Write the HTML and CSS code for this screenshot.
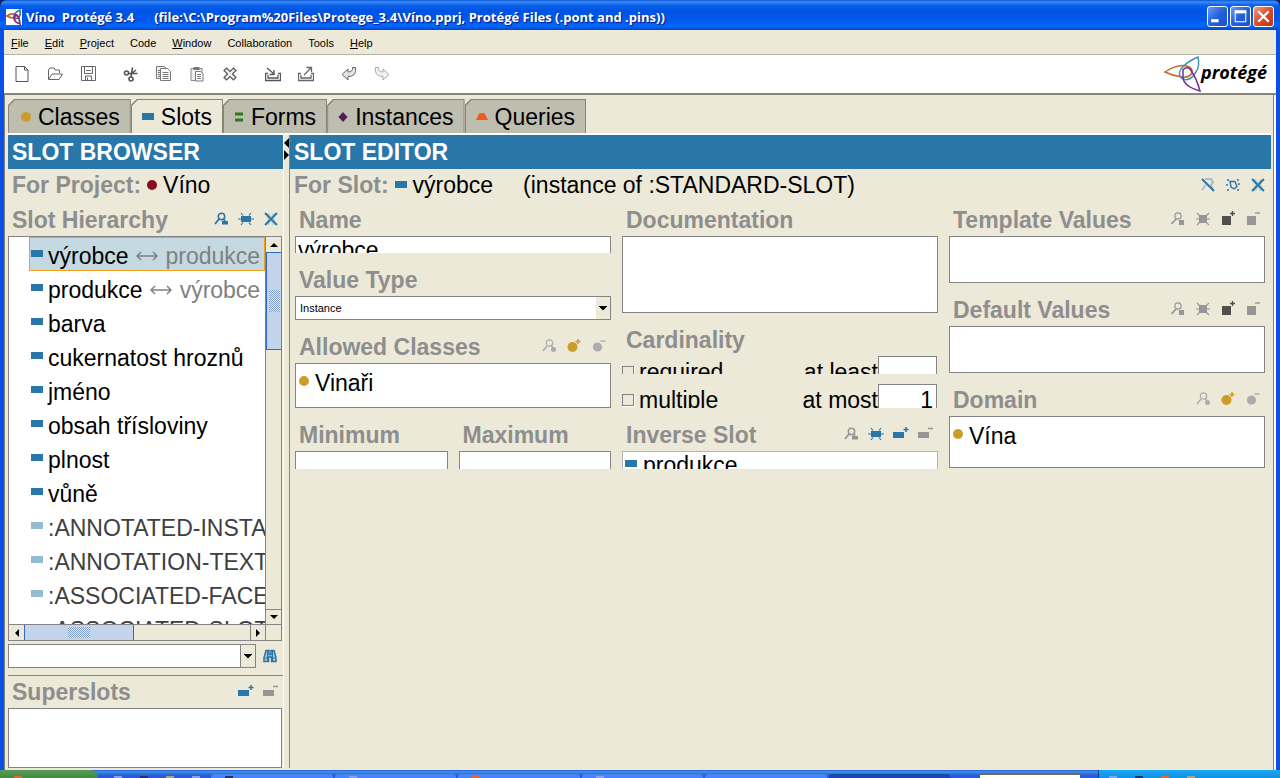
FILE: index.html
```html
<!DOCTYPE html>
<html lang="cs">
<head>
<meta charset="utf-8">
<title>Víno Protégé 3.4</title>
<link rel="stylesheet" href="styles.css">
</head>
<body>
<svg class="sprite" aria-hidden="true">
  <symbol id="view" viewBox="0 0 16 16"><circle cx="8.500" cy="5.500" r="3.200" fill="none" stroke="currentColor" stroke-width="1.500"/><path d="M6 8 2 13M10.500 8l1.500 2" stroke="currentColor" stroke-width="1.800"/><rect x="9" y="10" width="6" height="3.500" fill="currentColor"/></symbol>
  <symbol id="view-dot" viewBox="0 0 16 16"><circle cx="8.500" cy="5" r="3.200" fill="none" stroke="currentColor" stroke-width="1.200"/><path d="M6 8 2 13M10.500 8l1.500 2" stroke="currentColor" stroke-width="1.500"/><circle cx="12.500" cy="11.500" r="2.500" fill="currentColor"/></symbol>
  <symbol id="view-sq" viewBox="0 0 16 16"><circle cx="8" cy="5" r="3.200" fill="none" stroke="currentColor" stroke-width="1.200"/><path d="M6 8 1.500 13" stroke="currentColor" stroke-width="1.800"/><rect x="9" y="9" width="5" height="5" fill="currentColor"/></symbol>
  <symbol id="create" viewBox="0 0 16 16"><rect x="3" y="5" width="10" height="6" fill="currentColor"/><path d="M0 8h3M13 8h3M3 2l2 2.500M13 2l-2 2.500M3 14l2-2.500M13 14l-2-2.500" stroke="currentColor" stroke-width="1.200"/></symbol>
  <symbol id="create-sq" viewBox="0 0 16 16"><rect x="4" y="4" width="8" height="8" fill="currentColor"/><path d="M1 8h3M12 8h3M2 2l3 3M14 2l-3 3M2 14l3-3M14 14l-3-3" stroke="currentColor" stroke-width="1.200"/></symbol>
  <symbol id="cross" viewBox="0 0 16 16"><path d="M2 2h4l2 4 2-4h4l-3 6 3 6h-4l-2-4-2 4H2l3-6z" fill="currentColor" opacity=".25"/><path d="m2 2 12 12M14 2 2 14" stroke="currentColor" stroke-width="1.800"/></symbol>
  <symbol id="add-slot" viewBox="0 0 16 16"><rect x="0" y="6" width="11" height="6" fill="currentColor"/><path d="M13 1v5M10.500 3.500h5" stroke="currentColor" stroke-width="1.500"/></symbol>
  <symbol id="rem-slot" viewBox="0 0 16 16"><rect x="0" y="6" width="11" height="6" fill="currentColor"/><path d="M10 2.500h5" stroke="currentColor" stroke-width="1.500"/></symbol>
  <symbol id="add-dot" viewBox="0 0 16 16"><circle cx="6.500" cy="9" r="5" fill="currentColor"/><path d="M12 1v5M9.500 3.500h5" stroke="currentColor" stroke-width="1.500"/></symbol>
  <symbol id="rem-dot" viewBox="0 0 16 16"><circle cx="6.500" cy="9" r="4.600" fill="currentColor"/><path d="M9.500 3h5" stroke="currentColor" stroke-width="1.400"/></symbol>
  <symbol id="add-sq" viewBox="0 0 16 16"><rect x="2" y="5" width="9" height="9" fill="currentColor"/><path d="M12.500 0v5M10 2.500h5" stroke="currentColor" stroke-width="1.400"/></symbol>
  <symbol id="rem-sq" viewBox="0 0 16 16"><rect x="2" y="5" width="9" height="9" fill="currentColor"/><path d="M10 2h5" stroke="currentColor" stroke-width="1.400"/></symbol>
  <symbol id="slot" viewBox="0 0 12 7"><rect width="12" height="7" fill="currentColor"/></symbol>
  <symbol id="dot" viewBox="0 0 10 10"><circle cx="5" cy="5" r="5" fill="currentColor"/></symbol>
  <symbol id="arrows" viewBox="0 0 22 10"><path d="M1 5h20M5 1 1 5l4 4M17 1l4 4-4 4" fill="none" stroke="currentColor" stroke-width="1.500"/></symbol>
</svg>

<div class="window">
  <header class="titlebar">
    <svg class="app-icon" viewBox="0 0 16 16"><rect width="16" height="16" fill="#fff"/><path d="M1 7Q6 3 11 6.500 7 11 1 7z" fill="none" stroke="#c0622a" stroke-width="1.800"/><path d="M14 1q1 6-2 8-4 2-4-2 1-4 6-6z" fill="none" stroke="#3b6fa0" stroke-width="1.600"/><path d="M9 6q4-1 5 9-6-2-6-6z" fill="none" stroke="#763191" stroke-width="1.800"/></svg>
    <h1 class="title"><span>Víno&nbsp; Protégé 3.4</span><span>(file:\C:\Program%20Files\Protege_3.4\Víno.pprj, Protégé Files (.pont and .pins))</span></h1>
    <div class="win-buttons">
      <button class="win-btn" aria-label="Minimize"><svg viewBox="0 0 18 18"><path d="M3 13h7" stroke="#fff" stroke-width="3"/></svg></button>
      <button class="win-btn" aria-label="Maximize"><svg viewBox="0 0 18 18"><path d="M4 4.500h10V14H4z" fill="none" stroke="#fff"/><path d="M3.500 4.500h11" stroke="#fff" stroke-width="3"/></svg></button>
      <button class="win-btn close" aria-label="Close"><svg viewBox="0 0 18 18"><path d="m4 4 10 10M14 4 4 14" stroke="#fff" stroke-width="2.200"/></svg></button>
    </div>
  </header>

  <div class="frame">
    <nav class="menubar">
      <button><u>F</u>ile</button><button><u>E</u>dit</button><button><u>P</u>roject</button><button>Code</button><button><u>W</u>indow</button><button>Collaboration</button><button>Tools</button><button><u>H</u>elp</button>
    </nav>

    <div class="toolbar">
      <div class="tools">
        <button aria-label="New"><svg viewBox="0 0 16 16"><path d="M2 .5h8.500L14 4v11.500H2z" fill="#fff" stroke="#555"/><path d="M10.500.5V4H14" fill="none" stroke="#555"/></svg></button>
        <button aria-label="Open"><svg viewBox="0 0 16 16"><path d="M1.500 13V3.500L3 2h4l1 2h4.500v3M1.500 13.500 5 8h10.500l-3.500 5.500z" fill="none" stroke="#666"/></svg></button>
        <button aria-label="Save"><svg viewBox="0 0 16 16"><path d="M1.500.5h14v14h-14zM4.500.5v7h8v-7M5.500 14.500V10h6v4.500M7.500 11.500v3M6 4.500h5" fill="none" stroke="#666"/></svg></button>
      </div>
      <div class="tools">
        <button aria-label="Cut"><svg viewBox="0 0 16 16"><g fill="none" stroke="#555" stroke-width="1.600"><circle cx="3.500" cy="7" r="2"/><circle cx="8" cy="13" r="2"/><path d="M5.500 7.500h9M8 11l1.500-9.500M8 8l5-4"/></g></svg></button>
        <button aria-label="Copy"><svg viewBox="0 0 16 16"><path d="M4.500 12.500h-4v-12h8l3 3" fill="#eee" stroke="#777"/><path d="M4.500 2.500h7l3 3v9h-10z" fill="#fff" stroke="#777"/><path d="M6.500 6.500h6M6.500 8.500h6M6.500 10.500h6M6.500 12.500h6M2 4.500h2M2 6.500h2M2 8.500h2M2 10.500h2" stroke="#777"/></svg></button>
        <button aria-label="Paste"><svg viewBox="0 0 16 16"><path d="M2 2.500h11v12H2z" fill="#eee" stroke="#888"/><path d="M4.500 1h6v3h-6z" fill="#777"/><path d="M6.500 5.500h5l2.500 2v7.500H6.500z" fill="#fff" stroke="#777"/><path d="M8 8.500h4M8 10.500h4M8 12.500h4" stroke="#777"/></svg></button>
        <button aria-label="Delete"><svg viewBox="0 0 16 16"><path d="m4.500 2 3.500 3.500L11.500 2 14 4.500 10.500 8l3.500 3.500-2.500 2.500L8 10.500 4.500 14 2 11.500 5.500 8 2 4.500z" fill="#eee" stroke="#555" stroke-width="1.200"/></svg></button>
      </div>
      <div class="tools">
        <button aria-label="Archive"><svg viewBox="0 0 16 16"><path d="M3 7.500H.5v7h15v-7H13M3 9v3h10V9" fill="none" stroke="#555" stroke-width="1.300"/><path d="m2 2 7 6M9 4v4.500H4.500" fill="none" stroke="#555" stroke-width="1.300"/></svg></button>
        <button aria-label="Revert"><svg viewBox="0 0 16 16"><path d="M3 7.500H.5v7h15v-7H13M3 9v3h10V9" fill="none" stroke="#666" stroke-width="1.300"/><path d="m6 9 7-7M8.500 1.500h5V6" fill="none" stroke="#666" stroke-width="1.300"/></svg></button>
      </div>
      <div class="tools">
        <button aria-label="Undo"><svg viewBox="0 0 16 16"><path d="m1 8.500 6-5.500v3q5 0 4.500-4.500h3q1.500 9-7.500 9v3.500z" fill="#e4e4e4" stroke="#666"/></svg></button>
        <button aria-label="Redo"><svg viewBox="0 0 16 16"><path d="M15 8.500 9 3v3q-5 0-4.500-4.500h-3q-1.500 9 7.500 9v3.500z" fill="#f2f2f2" stroke="#aaa"/></svg></button>
      </div>
      <div class="logo">
        <svg viewBox="0 0 38 38"><g fill="none" stroke-width="1.500"><path d="M2 17Q14 9 24 11q6 2 5 7-3 5-10 4-9-1-17-5z" stroke="#bf6a25"/><path d="M35 2q2 9-2 15-6 10-13 7-6-3-2-10 5-7 17-12z" stroke="#4691b8"/><path d="M20 15q3-4 7-1 7 10 10 22-17-5-17-14 0-5 0-7z" stroke="#7a2c92"/></g></svg>
        <span>protégé</span>
      </div>
    </div>

    <main class="work">
      <div class="tabs" role="tablist">
        <button class="tab" role="tab"><svg class="i-dot gold"><use href="#dot"/></svg>Classes</button>
        <button class="tab selected" role="tab" aria-selected="true"><svg class="i-slot blue"><use href="#slot"/></svg>Slots</button>
        <button class="tab" role="tab"><svg class="i-dot" viewBox="0 0 10 10"><path d="M1 2h8M1 8h8" stroke="#267d1a" stroke-width="3"/></svg>Forms</button>
        <button class="tab" role="tab"><svg class="i-dot" viewBox="0 0 10 10"><path d="m5 0 4.500 5L5 10 .5 5z" fill="#541b55"/></svg>Instances</button>
        <button class="tab" role="tab"><svg class="i-slot" viewBox="0 0 12 7"><path d="M3.500 0h5L12 7H0z" fill="#f25a1a"/></svg>Queries</button>
      </div>

      <div class="panes">
        <section class="browser">
          <h2 class="banner">SLOT BROWSER</h2>
          <div class="caption"><b>For Project:</b><svg class="i-dot maroon"><use href="#dot"/></svg><span>Víno</span></div>
          <div class="heading"><h3>Slot Hierarchy</h3>
            <div class="actions blue">
              <button aria-label="View slot"><svg><use href="#view"/></svg></button>
              <button aria-label="Create slot"><svg><use href="#create"/></svg></button>
              <button aria-label="Delete slot"><svg><use href="#cross"/></svg></button>
            </div>
          </div>
          <div class="tree-box">
            <ul class="tree">
              <li class="current"><svg class="i-slot"><use href="#slot"/></svg>výrobce<span class="inverse"><svg><use href="#arrows"/></svg>produkce</span></li>
              <li><svg class="i-slot"><use href="#slot"/></svg>produkce<span class="inverse"><svg><use href="#arrows"/></svg>výrobce</span></li>
              <li><svg class="i-slot"><use href="#slot"/></svg>barva</li>
              <li><svg class="i-slot"><use href="#slot"/></svg>cukernatost hroznů</li>
              <li><svg class="i-slot"><use href="#slot"/></svg>jméno</li>
              <li><svg class="i-slot"><use href="#slot"/></svg>obsah třísloviny</li>
              <li><svg class="i-slot"><use href="#slot"/></svg>plnost</li>
              <li><svg class="i-slot"><use href="#slot"/></svg>vůně</li>
              <li class="system"><svg class="i-slot"><use href="#slot"/></svg>:ANNOTATED-INSTANCE</li>
              <li class="system"><svg class="i-slot"><use href="#slot"/></svg>:ANNOTATION-TEXT</li>
              <li class="system"><svg class="i-slot"><use href="#slot"/></svg>:ASSOCIATED-FACET</li>
              <li class="system"><svg class="i-slot"><use href="#slot"/></svg>:ASSOCIATED-SLOT</li>
            </ul>
            <div class="scroll vertical">
              <button class="arrow up" aria-label="Scroll up"></button>
              <div class="thumb"><i></i></div>
              <button class="arrow down" aria-label="Scroll down"></button>
            </div>
            <div class="scroll horizontal">
              <button class="arrow left" aria-label="Scroll left"></button>
              <div class="thumb"><i></i></div>
              <button class="arrow right" aria-label="Scroll right"></button>
            </div>
            <div class="corner"></div>
          </div>
          <div class="search">
            <select class="combo lined" aria-label="Find slot"><option></option></select>
            <button class="find" aria-label="Find"><svg viewBox="0 0 14 14"><path d="M3 1.500h3v4h2v-4h3l2 7v4H8.500V8h-3v4.500H1v-4z" fill="#a8c6d6" stroke="#2976a8" stroke-width="1.500"/><path d="M2 9h3M9 9h3M4.500 2v10M9.500 2v10" stroke="#2976a8"/></svg></button>
          </div>
          <div class="super">
            <div class="heading"><h3>Superslots</h3>
              <div class="actions">
                <button class="blue" aria-label="Add superslot"><svg><use href="#add-slot"/></svg></button>
                <button class="gray" aria-label="Remove superslot"><svg><use href="#rem-slot"/></svg></button>
              </div>
            </div>
            <div class="box"></div>
          </div>
        </section>

        <div class="splitter"><button class="arrow left" aria-label="Collapse browser"></button><button class="arrow right" aria-label="Expand browser"></button></div>

        <section class="editor">
          <h2 class="banner">SLOT EDITOR</h2>
          <div class="caption"><b>For Slot:</b><svg class="i-slot blue"><use href="#slot"/></svg><span>výrobce</span><span class="type">(instance of :STANDARD-SLOT)</span>
            <div class="actions blue">
              <button aria-label="Hide notes"><svg viewBox="0 0 16 16"><path d="M2 13 6 8M5 2h6l2 3-2 3 2 4" fill="none" stroke="currentColor" stroke-width="2" opacity=".35"/><path d="m2 2 12 12" stroke="currentColor" stroke-width="2"/></svg></button>
              <button aria-label="Constraints"><svg viewBox="0 0 16 16"><g fill="none" stroke="currentColor" stroke-width="1.400"><path d="M5 4.500h5l2 5-3 2.500-3-2z"/><path d="M2 3h2M12 3h2M1 8h2M13 7h2M2 13h2M12 13h2"/></g></svg></button>
              <button aria-label="Close form"><svg><use href="#cross"/></svg></button>
            </div>
          </div>

          <form class="form">
            <div class="col">
              <div class="field"><label class="heading" for="name">Name</label><div class="clip short"><input id="name" class="box line" value="výrobce"></div></div>
              <div class="field"><label class="heading" for="vtype">Value Type</label><select id="vtype" class="combo"><option>Instance</option></select></div>
              <div class="field"><div class="heading"><h3>Allowed Classes</h3>
                <div class="actions">
                  <button type="button" class="pale" aria-label="View class"><svg><use href="#view-dot"/></svg></button>
                  <button type="button" class="gold" aria-label="Add class"><svg><use href="#add-dot"/></svg></button>
                  <button type="button" class="pale" aria-label="Remove class"><svg><use href="#rem-dot"/></svg></button>
                </div></div>
                <div class="box allowed"><div class="item"><svg class="i-dot gold"><use href="#dot"/></svg>Vinaři</div></div>
              </div>
              <div class="pair">
                <div class="field"><label class="heading" for="min">Minimum</label><div class="clip"><input id="min" class="box line"></div></div>
                <div class="field"><label class="heading" for="max">Maximum</label><div class="clip"><input id="max" class="box line"></div></div>
              </div>
            </div>

            <div class="col">
              <div class="field"><label class="heading" for="doc">Documentation</label><textarea id="doc" class="box doc"></textarea></div>
              <div class="field"><div class="heading"><h3>Cardinality</h3></div>
                <div class="clip"><div class="card-row"><input type="checkbox" id="req"><label for="req">required</label><label class="bound" for="least">at least</label><input id="least" class="box num"></div></div>
                <div class="clip tall"><div class="card-row"><input type="checkbox" id="mul"><label for="mul">multiple</label><label class="bound" for="most">at most</label><input id="most" class="box num" value="1"></div></div>
              </div>
              <div class="field"><div class="heading"><h3>Inverse Slot</h3>
                <div class="actions">
                  <button type="button" class="gray" aria-label="View inverse"><svg><use href="#view"/></svg></button>
                  <button type="button" class="blue" aria-label="Create inverse"><svg><use href="#create"/></svg></button>
                  <button type="button" class="blue" aria-label="Add inverse"><svg><use href="#add-slot"/></svg></button>
                  <button type="button" class="gray" aria-label="Remove inverse"><svg><use href="#rem-slot"/></svg></button>
                </div></div>
                <div class="clip"><div class="box line soft"><div class="item"><svg class="i-slot blue"><use href="#slot"/></svg>produkce</div></div></div>
              </div>
            </div>

            <div class="col">
              <div class="field"><div class="heading"><h3>Template Values</h3>
                <div class="actions">
                  <button type="button" class="gray" aria-label="View value"><svg><use href="#view-sq"/></svg></button>
                  <button type="button" class="gray" aria-label="Create value"><svg><use href="#create-sq"/></svg></button>
                  <button type="button" class="dark" aria-label="Add value"><svg><use href="#add-sq"/></svg></button>
                  <button type="button" class="gray" aria-label="Remove value"><svg><use href="#rem-sq"/></svg></button>
                </div></div>
                <div class="box values"></div>
              </div>
              <div class="field"><div class="heading"><h3>Default Values</h3>
                <div class="actions">
                  <button type="button" class="gray" aria-label="View default"><svg><use href="#view-sq"/></svg></button>
                  <button type="button" class="gray" aria-label="Create default"><svg><use href="#create-sq"/></svg></button>
                  <button type="button" class="dark" aria-label="Add default"><svg><use href="#add-sq"/></svg></button>
                  <button type="button" class="gray" aria-label="Remove default"><svg><use href="#rem-sq"/></svg></button>
                </div></div>
                <div class="box values"></div>
              </div>
              <div class="field"><div class="heading"><h3>Domain</h3>
                <div class="actions">
                  <button type="button" class="pale" aria-label="View domain"><svg><use href="#view-dot"/></svg></button>
                  <button type="button" class="gold" aria-label="Add domain"><svg><use href="#add-dot"/></svg></button>
                  <button type="button" class="pale" aria-label="Remove domain"><svg><use href="#rem-dot"/></svg></button>
                </div></div>
                <div class="box domain"><div class="item"><svg class="i-dot gold"><use href="#dot"/></svg>Vína</div></div>
              </div>
            </div>
          </form>
        </section>
      </div>
    </main>
  </div>

  <footer class="taskbar">
    <div class="start"><i class="orange"></i></div>
    <div class="quick"><i class="light"></i><i class="navy"></i><i class="yellow"></i><i class="light"></i></div>
    <div class="task"><i class="navy"></i></div>
    <div class="task"><i class="light"></i></div>
    <div class="task"><i class="orange"></i></div>
    <div class="task"><i class="light"></i></div>
    <div class="task"></div>
    <div class="task active"></div>
    <div class="langbox"></div>
    <div class="tray"><i class="light"></i><i class="navy"></i><i class="orange"></i><i class="yellow"></i></div>
  </footer>
</div>
</body>
</html>
```

FILE: styles.css
```css
* { box-sizing: border-box; }

body {
  margin: 0;
  font: 23px/34px "Liberation Sans", Arial, sans-serif;
  color: #000;
  background: #0a246a;
}

h1, h2, h3, ul { margin: 0; padding: 0; font-size: inherit; }
button { border: 0; padding: 0; background: none; font: inherit; color: inherit; }
input, select, textarea { font: inherit; color: inherit; border-radius: 0; outline: 0; }
svg { display: block; flex: none; }
.sprite { position: absolute; width: 0; height: 0; }

.blue { color: #2976a8; }
.gold { color: #cb9d28; }
.maroon { color: #8a0b22; }
.gray { color: #969696; }
.pale { color: #acacac; }
.dark { color: #50504a; }

.i-slot { width: 12px; height: 7px; }
.i-dot { width: 10px; height: 10px; }

.window { display: flex; flex-direction: column; height: 100vh; overflow: hidden; }

/* title bar */
.titlebar {
  display: flex;
  align-items: center;
  height: 30px;
  flex: none;
  padding: 3px 6px 0;
  border-radius: 7px 7px 0 0;
  background: linear-gradient(#0a55d5 0, #3c8cf8 2px, #0c62ea 5px, #0054e3 10px, #0058ee 20px, #0468fd 26px, #0046c8 30px);
}
.app-icon { width: 16px; height: 16px; }
.title {
  display: flex;
  gap: 20px;
  flex: 1;
  margin-left: 4px;
  font: bold 13px/20px "Open Sans", sans-serif;
  color: #fff;
  text-shadow: 1px 1px 1px #0a1883;
  white-space: nowrap;
}
.win-buttons { display: flex; gap: 2px; }
.win-btn {
  width: 21px;
  height: 21px;
  border: 1px solid #fff;
  border-radius: 3px;
  background: linear-gradient(135deg, #6d9bf5, #2360de 50%, #1c50c8);
}
.win-btn.close { background: linear-gradient(135deg, #f0a088, #e0492a 50%, #c0330f); }
.win-btn svg { width: 19px; height: 19px; }

.frame {
  flex: 1;
  min-height: 0;
  display: flex;
  flex-direction: column;
  border: solid #0a4fe8;
  border-width: 0 4px;
  background: #ece9d8;
}

/* menu and toolbar */
.menubar {
  display: flex;
  gap: 16px;
  height: 25px;
  flex: none;
  align-items: center;
  padding: 1px 7px 0;
  border-bottom: 1px solid #b8b5a4;
  font-size: 11px;
  line-height: 16px;
}
.toolbar {
  display: flex;
  gap: 27px;
  align-items: center;
  height: 40px;
  flex: none;
  padding: 0 9px 0 10px;
  background: #fff;
  border-bottom: 2px solid #888578;
}
.tools { display: flex; gap: 17px; }
.tools svg { width: 16px; height: 16px; }
.logo {
  display: flex;
  align-items: center;
  margin-left: auto;
  font: italic bold 18px/24px "Open Sans", sans-serif;
}
.logo svg { width: 38px; height: 38px; }
.logo span { padding-bottom: 4px; }

.work {
  flex: 1;
  min-height: 0;
  display: flex;
  flex-direction: column;
  margin-right: 2px;
  padding: 4px 2px 2px;
  border: solid #848178;
  border-width: 0 1px;
  box-shadow: 2px 0 #fff;
}

/* tabs */
.tabs { display: flex; padding-left: 1px; border-bottom: 2px solid #fff; }
.tab {
  position: relative;
  z-index: 0;
  display: flex;
  align-items: center;
  gap: 7px;
  padding: 1px 11px 0;
  height: 34px;
  background: #84847a;
  clip-path: polygon(6px 0, 100% 0, 100% 100%, 0 100%, 0 6px);
}
.tab:first-child { padding-left: 13px; }
.tab::before {
  content: "";
  position: absolute;
  z-index: -1;
  inset: 1px 1px 0 1px;
  background: #bdbdb0;
  clip-path: polygon(6px 0, 100% 0, 100% 100%, 0 100%, 0 6px);
}
.tab.selected::before { background: #ece9d8; }

/* panes */
.panes { flex: 1; min-height: 0; display: flex; }
.browser { width: 275px; margin-left: 1px; display: flex; flex-direction: column; flex: none; }
.editor { flex: 1; min-width: 0; }
.banner { height: 34px; padding: 1px 4px 0; line-height: 33px; color: #fff; background: #2976a8; white-space: nowrap; overflow: hidden; }
.caption { display: flex; align-items: center; gap: 6px; height: 33px; padding: 0 5px 2px 4px; white-space: nowrap; }
.caption b { color: #8e8e8e; }
.caption .type { margin-left: 24px; }
.heading {
  display: flex;
  align-items: center;
  height: 34px;
  padding: 2px 4px 0;
  font-weight: bold;
  color: #8e8e8e;
  white-space: nowrap;
}
.actions { display: flex; gap: 9px; margin-left: auto; }
.heading .actions { padding-bottom: 2px; }
.actions svg { width: 16px; height: 16px; }

.box {
  display: block;
  width: 100%;
  margin: 0;
  padding: 0 3px;
  border: 1px solid #848484;
  background: #fff;
  resize: none;
}

/* slot tree */
.tree-box {
  flex: 1;
  min-height: 0;
  display: grid;
  grid-template: minmax(0, 1fr) 16px / minmax(0, 1fr) 16px;
  margin-right: 1px;
  border: 1px solid #848484;
  background: #fff;
}
.tree { list-style: none; padding-left: 20px; overflow: hidden; }
.tree li {
  display: flex;
  align-items: center;
  gap: 5px;
  height: 34px;
  padding: 3px 0 0 1px;
  border: 1px solid transparent;
  white-space: nowrap;
}
.tree li > .i-slot { margin-bottom: 4px; color: #2976a8; }
.tree .current { background: #c5d9e3; border-color: #f0a020; }
.tree .system { color: #404040; }
.tree .system > .i-slot { color: #94bbd3; }
.inverse { display: flex; align-items: center; gap: 8px; margin-left: 2px; color: #808080; }
.inverse svg { width: 22px; height: 10px; }

.scroll { display: flex; background: #ece9d8; }
.scroll.vertical { flex-direction: column; border-left: 1px solid #848484; }
.scroll.horizontal { border-top: 1px solid #848484; }
.corner { background: #ece9d8; border: solid #848484; border-width: 1px 0 0 1px; }
.arrow { display: grid; place-items: center; flex: none; width: 15px; height: 15px; }
.arrow::before { content: ""; border: 4px solid transparent; }
.arrow.up::before { border-top: 0; border-bottom-color: #000; }
.arrow.down::before { border-bottom: 0; border-top-color: #000; }
.arrow.left::before { border-left: 0; border-right-color: #000; }
.arrow.right::before { border-right: 0; border-left-color: #000; }
.arrow.down { margin-top: auto; border-top: 1px solid #848484; }
.scroll .arrow.right { margin-left: auto; border-left: 1px solid #848484; }
.thumb { display: grid; place-items: center; background: #c3d3ea; border: 1px solid #316ac5; }
.vertical .thumb { height: 98px; border-width: 1px 0 1px 1px; }
.horizontal .thumb { width: 110px; border-width: 0 1px; }
.thumb i {
  width: 11px;
  height: 22px;
  background: conic-gradient(#5c84c0 25%, #f4f8ff 0 50%, #5c84c0 0 75%, #f4f8ff 0) 0 0 / 2px 2px;
  opacity: .7;
}
.horizontal .thumb i { width: 22px; height: 11px; }

.search { display: flex; gap: 1px; padding: 3px 1px 0 0; align-items: center; }
.combo {
  display: block;
  width: 100%;
  height: 24px;
  margin: 0;
  padding: 0 4px;
  border: 1px solid #848484;
  appearance: none;
  font-size: 11px;
  font-weight: normal;
  line-height: 16px;
  color: #000;
  background:
    conic-gradient(from -45deg at 50% 100%, #000 90deg, transparent 0) right 3px center / 8px 4px no-repeat,
    linear-gradient(#ece9d8, #ece9d8) right / 14px 100% no-repeat,
    #fff;
  background:
    linear-gradient(#000, #000) right 3px top 9px / 8px 1px no-repeat,
    linear-gradient(#000, #000) right 4px top 10px / 6px 1px no-repeat,
    linear-gradient(#000, #000) right 5px top 11px / 4px 1px no-repeat,
    linear-gradient(#000, #000) right 6px top 12px / 2px 1px no-repeat,
    linear-gradient(#ece9d8, #ece9d8) right / 14px 100% no-repeat,
    linear-gradient(var(--divider, #fff), var(--divider, #fff)) right / 15px 100% no-repeat,
    #fff;
}
.combo.lined { --divider: #848484; }
.find { width: 25px; height: 24px; flex: none; display: grid; place-items: center; }
.find svg { width: 14px; height: 14px; }
.super { margin-top: 7px; border-top: 1px solid #848484; }
.super .heading { height: 32px; padding-top: 0; }
.super .actions { padding-bottom: 0; }
.super .box { height: 60px; width: auto; margin-right: 1px; }

.splitter {
  width: 7px;
  flex: none;
  padding-top: 2px;
  border: solid #848484;
  border-width: 0 1px 0 0;
  box-shadow: inset 1px 0 #fff;
}
.splitter .arrow { width: 6px; height: 12px; }
.splitter .arrow::before { border-width: 5px; }
.splitter .arrow.left::before { border-left-width: 0; }
.splitter .arrow.right::before { border-right-width: 0; }

/* form */
.form {
  display: grid;
  grid-template-columns: repeat(3, minmax(0, 1fr));
  gap: 11px;
  padding: 0 6px 0 5px;
}
.col { display: flex; flex-direction: column; gap: 9px; min-width: 0; }
.pair { display: grid; grid-template-columns: 1fr 1fr; gap: 11px; }
.clip { height: 18px; overflow: hidden; }
.clip.short { height: 17px; }
.clip.tall { height: 24px; margin-top: 10px; }
.line { height: 28px; line-height: 26px; padding: 0 2px; }
.line .item { padding-top: 0; line-height: 26px; }
.soft { border-color: #b4b4b4; }
.item { display: flex; align-items: center; gap: 6px; padding-top: 2px; }
.item svg { margin-bottom: 4px; }
.allowed { height: 45px; }
.doc { height: 77px; }
.values { height: 47px; }
.domain { height: 52px; }
.card-row { display: flex; align-items: center; height: 32px; }
.card-row input[type="checkbox"] {
  appearance: none;
  width: 12px;
  height: 12px;
  margin: 0 5px 0 0;
  border: 1px solid #848484;
  box-shadow: 1px 1px #fff;
}
.bound { margin-left: auto; }
.num { width: 59px; height: 32px; margin-right: 1px; text-align: right; }

/* taskbar */
.taskbar {
  display: flex;
  align-items: flex-end;
  gap: 2px;
  height: 8px;
  flex: none;
  background: linear-gradient(#2260d8 0, #4a90ec 2px, #2a6ad8 4px, #2258d4 8px);
}
.taskbar i { width: 8px; height: 2px; }
.taskbar .orange { background: #e06838; }
.taskbar .navy { background: #183868; }
.taskbar .yellow { background: #a0a890; }
.taskbar .light { background: #80a8e8; }
.start { width: 98px; height: 8px; display: flex; align-items: flex-end; padding-left: 14px; border-radius: 0 8px 0 0; background: linear-gradient(#5a9a58, #3c8c3c); }
.quick { width: 109px; display: flex; gap: 18px; padding-left: 14px; }
.task { flex: 1; height: 4px; display: flex; align-items: flex-end; padding-left: 14px; border-radius: 3px 3px 0 0; background: #4088f4; }
.task.active { background: #184aac; }
.langbox { width: 100px; height: 4px; margin: 0 16px 0 28px; background: #fff; border-top: 1px solid #706858; }
.tray { width: 182px; height: 8px; display: flex; align-items: flex-end; gap: 18px; padding-left: 10px; background: linear-gradient(#18a8f0, #1490e8); border-left: 1px solid #083c90; }
```
